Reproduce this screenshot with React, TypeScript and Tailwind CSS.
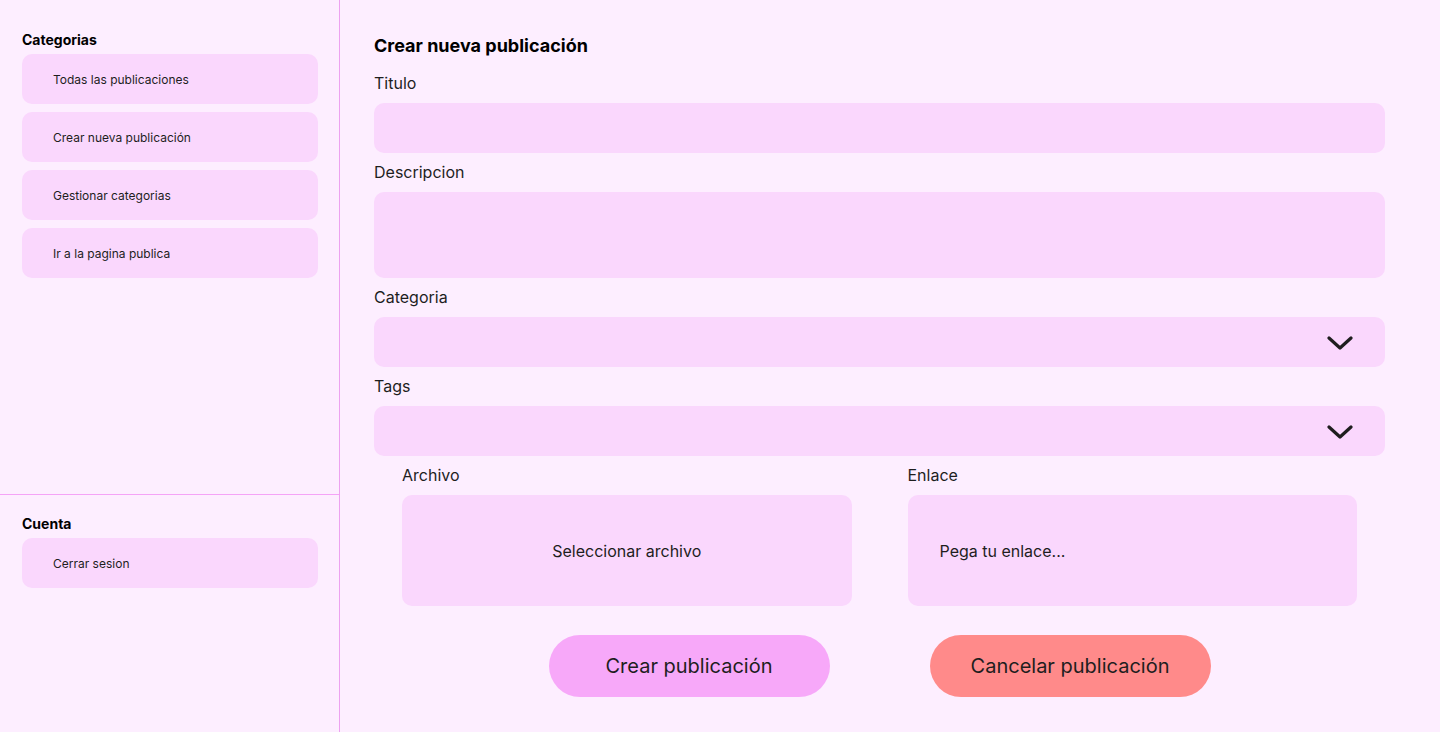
const navItems = [
  "Todas las publicaciones",
  "Crear nueva publicación",
  "Gestionar categorias",
  "Ir a la pagina publica",
];

const Chevron = () => (
  <svg width="26" height="16" viewBox="0 0 26 16" fill="none" className="mt-[4px]">
    <polyline
      points="2,2 13,12 24,2"
      stroke="#1e1e1e"
      strokeWidth="3.2"
      strokeLinecap="round"
      strokeLinejoin="round"
    />
  </svg>
);

const Label = ({ children }: { children: React.ReactNode }) => (
  <label className="block h-5 text-base leading-5 text-[#1e1e1e]">{children}</label>
);

const Select = () => (
  <div className="mt-[10px] flex h-[50px] items-center justify-end rounded-[10px] bg-[#fad7fd] pr-[32px]">
    <Chevron />
  </div>
);

export default function App() {
  return (
    <div className="flex h-[732px] w-full bg-[#fdeeff] font-['Inter','Noto_Sans',sans-serif] text-[#1e1e1e]">
      <aside className="flex w-[340px] shrink-0 flex-col border-r border-[#eda2f0]">
        <div className="h-[495px] border-b border-[#f5a3f7] pl-[22px] pr-[21px] pt-[31px]">
          <h2 className="h-[17px] text-sm font-bold leading-[17px] text-black">Categorias</h2>
          <div className="mt-[6px] flex flex-col gap-2">
            {navItems.map((item) => (
              <div
                key={item}
                className="flex h-[50px] items-center rounded-[10px] bg-[#fad7fd] pl-[31px] pt-px text-xs"
              >
                {item}
              </div>
            ))}
          </div>
        </div>
        <div className="pl-[22px] pr-[21px] pt-[20px]">
          <h2 className="h-[17px] text-sm font-bold leading-[17px] text-black">Cuenta</h2>
          <div className="mt-[6px] flex h-[50px] items-center rounded-[10px] bg-[#fad7fd] pl-[31px] pt-px text-xs">
            Cerrar sesion
          </div>
        </div>
      </aside>

      <main className="flex-1 pl-[34px] pr-[55px] pt-[35px]">
        <h1 className="h-[22px] text-lg font-bold leading-[22px] text-black">Crear nueva publicación</h1>

        <div className="mt-[16px]">
          <Label>Titulo</Label>
          <div className="mt-[10px] h-[50px] rounded-[10px] bg-[#fad7fd]" />
        </div>

        <div className="mt-[9px]">
          <Label>Descripcion</Label>
          <div className="mt-[10px] h-[86px] rounded-[10px] bg-[#fad7fd]" />
        </div>

        <div className="mt-[9px]">
          <Label>Categoria</Label>
          <Select />
        </div>

        <div className="mt-[9px]">
          <Label>Tags</Label>
          <Select />
        </div>

        <div className="mt-[9px] grid grid-cols-2 gap-[56px] px-[28px]">
          <div>
            <Label>Archivo</Label>
            <div className="mt-[10px] flex h-[111px] items-center justify-center rounded-[10px] bg-[#fad7fd] text-base">
              Seleccionar archivo
            </div>
          </div>
          <div>
            <Label>Enlace</Label>
            <div className="mt-[10px] flex h-[111px] items-center rounded-[10px] bg-[#fad7fd] pl-[32px] text-base">
              Pega tu enlace...
            </div>
          </div>
        </div>

        <div className="mt-[29px] flex justify-center gap-[100px]">
          <button className="h-[62px] w-[281px] rounded-full bg-[#f7a8f9] text-xl">
            Crear publicación
          </button>
          <button className="h-[62px] w-[281px] rounded-full bg-[#ff8a8a] text-xl">
            Cancelar publicación
          </button>
        </div>
      </main>
    </div>
  );
}
